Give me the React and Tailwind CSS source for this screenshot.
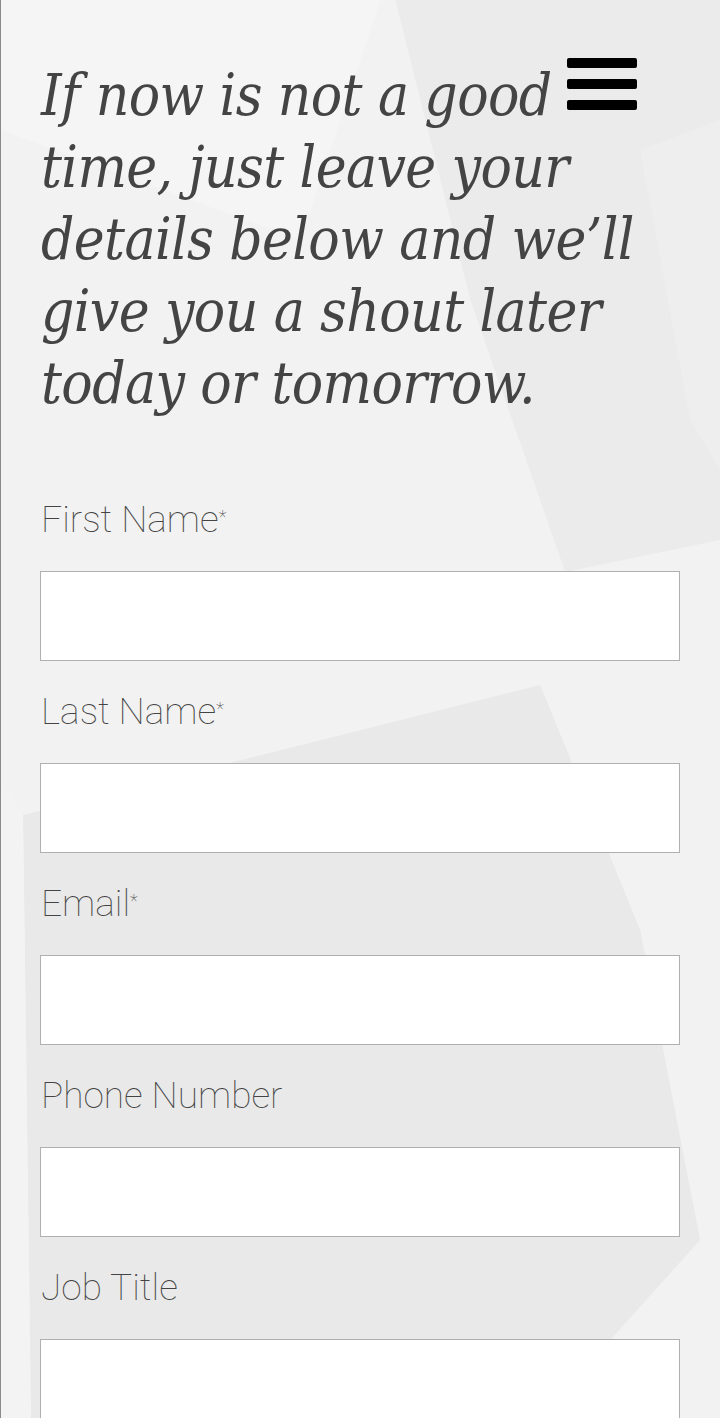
const fields = [
  { label: "First Name", required: true },
  { label: "Last Name", required: true },
  { label: "Email", required: true },
  { label: "Phone Number" },
  { label: "Job Title" },
];

function Backdrop() {
  return (
    <svg
      className="absolute inset-0 h-full w-full"
      viewBox="0 0 720 1418"
      preserveAspectRatio="none"
    >
      <rect width="720" height="1418" fill="#f2f2f2" />
      <polygon points="0,0 380,0 300,240 0,130" fill="#f5f5f5" />
      <polygon points="395,0 720,0 720,540 565,572 470,300" fill="#ebebeb" />
      <polygon points="640,150 720,120 720,470 690,420" fill="#eeeeee" />
      <polygon
        points="22,815 540,685 640,930 700,1240 540,1418 30,1418"
        fill="#e9e9e9"
      />
      <polygon points="0,780 22,815 30,1418 0,1418" fill="#f3f3f3" />
    </svg>
  );
}

export default function App() {
  return (
    <div className="relative h-[1418px] w-full overflow-hidden border-l border-[#8a8a8a]">
      <Backdrop />

      <button className="absolute left-[566px] top-[58px] flex w-[70px] flex-col gap-[11px]">
        <span className="block h-[10px] w-full rounded-[2px] bg-black" />
        <span className="block h-[10px] w-full rounded-[2px] bg-black" />
        <span className="block h-[10px] w-full rounded-[2px] bg-black" />
      </button>

      <div className="relative pl-[40px] pt-[59px]">
        <h1 className="whitespace-nowrap font-['DejaVu_Serif_Condensed','DejaVu_Serif',serif] text-[58px] italic leading-[72px] tracking-[-0.6px] text-[#444] [font-stretch:condensed]">
          If now is not a good
          <br />
          time, just leave your
          <br />
          details below and we’ll
          <br />
          give you a shout later
          <br />
          today or tomorrow.
        </h1>

        <form className="-ml-px mt-[81px] flex flex-col">
          {fields.map((f, i) => (
            <div key={f.label} className={i === 0 ? "" : "mt-[31px]"}>
              <label className="ml-px block font-['Roboto',sans-serif] text-[37px] font-thin leading-[40px] text-[#444]">
                {f.label}
                {f.required && <sup className="text-[18px]">*</sup>}
              </label>
              <input
                type="text"
                className="mt-[31px] block h-[90px] w-[640px] border border-[#b0b0b0] bg-white px-3 outline-none"
              />
            </div>
          ))}
        </form>
      </div>
    </div>
  );
}
